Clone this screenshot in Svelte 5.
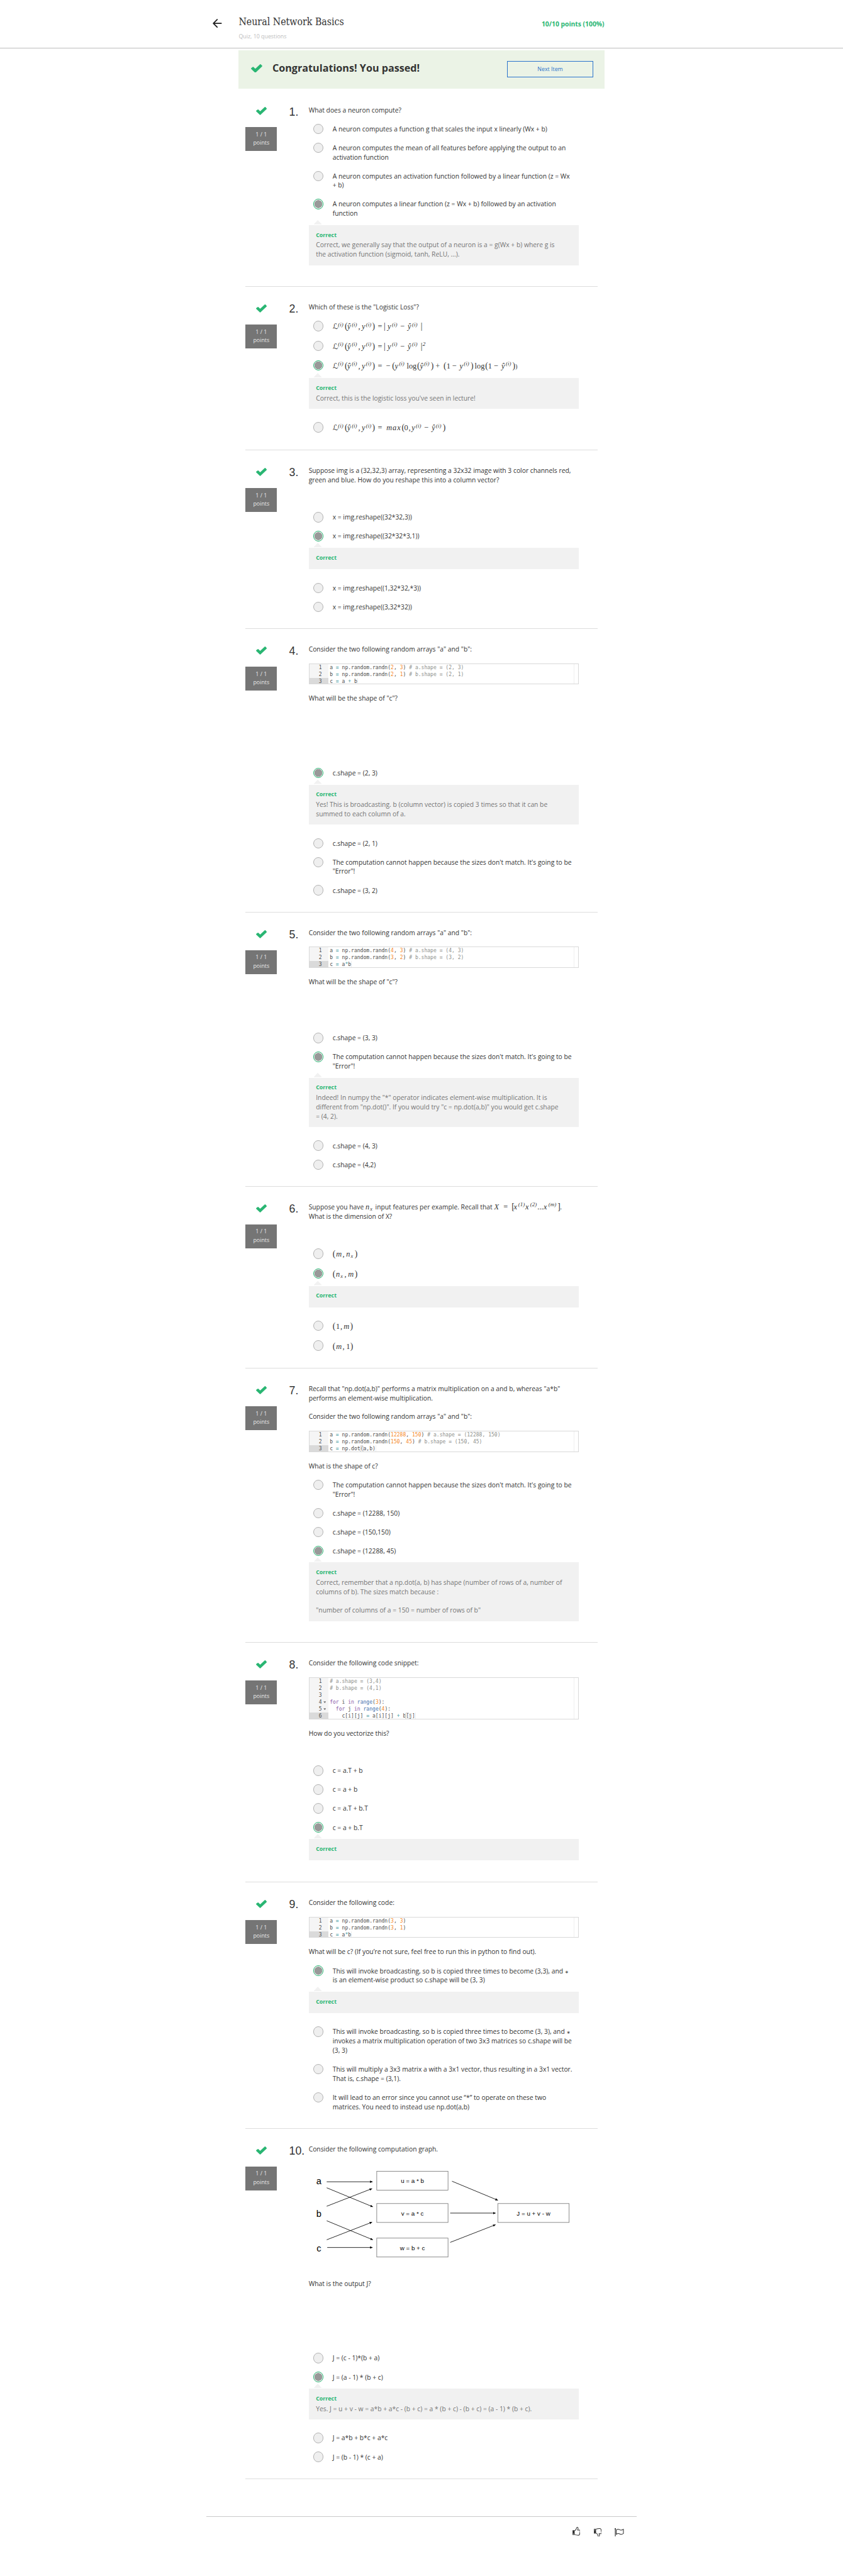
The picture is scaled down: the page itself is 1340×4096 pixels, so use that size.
<script>
  // A maths token is [kind, text, slot width].
  const supI = (w) => ['sup', '(i)', w];
  const lossHead = [
    ['cal', 'ℒ', 16.2], supI(20.4), ['op', '(', 7.8], ['it', 'ŷ', 13.4], supI(19.5),
    ['op', ',', 10.4], ['it', 'y', 13], supI(18.6), ['op', ')', 17]
  ];
  const absBody = [
    ['op', '=', 18], ['op', '|', 11.7], ['it', 'y', 13], supI(25.6),
    ['op', '−', 22], ['it', 'ŷ', 13.4], supI(25.8), ['op', '|', 6]
  ];
  const m = (tokens) => ({ math: tokens });
  const isFence = (kind, text) => kind === 'op' && '()[]|'.includes(text);

  const opt = (...lines) => ({ lines });
  const ok = (lines, notes = []) => ({ lines, correct: true, notes });

  const num = (t) => ['n', t];
  const op = (t) => ['o', t];
  const com = (t) => ['c', t];
  const kw = (t) => ['k', t];
  const fn = (t) => ['f', t];
  const randn = (name, a, b, comment) => [
    name + ' ', op('='), ' np.random.randn(', num(a), ', ', num(b), ') ', com(comment)
  ];
  const mismatch = ["The computation cannot happen because the sizes don't match. It's going to be", '"Error"!'];
  const arrays = { p: ['Consider the two following random arrays "a" and "b":'] };

  const questions = [
    {
      body: [{ p: ['What does a neuron compute?'] }],
      options: [
        opt('A neuron computes a function g that scales the input x linearly (Wx + b)'),
        opt('A neuron computes the mean of all features before applying the output to an', 'activation function'),
        opt('A neuron computes an activation function followed by a linear function (z = Wx', '+ b)'),
        ok(['A neuron computes a linear function (z = Wx + b) followed by an activation', 'function'],
          ['Correct, we generally say that the output of a neuron is a = g(Wx + b) where g is', 'the activation function (sigmoid, tanh, ReLU, ...).'])
      ]
    },
    {
      body: [{ p: ['Which of these is the "Logistic Loss"?'] }],
      options: [
        opt([m([...lossHead, ...absBody])]),
        opt([m([...lossHead, ...absBody, ['sup', '2', 8]])]),
        ok([[m([...lossHead,
          ['op', '=', 25], ['op', '−', 18.2], ['op', '(', 8.2], ['it', 'y', 13], supI(23),
          ['op', 'log', 31.2], ['op', '(', 8.7], ['it', 'ŷ', 12.6], supI(20), ['op', ')', 14.3],
          ['op', '+', 24.3], ['op', '(', 9.1], ['op', '1', 17.3], ['op', '−', 22.1], ['it', 'y', 13],
          supI(20), ['op', ')', 12.6], ['op', 'log', 31.7], ['op', '(', 8.7], ['op', '1', 17.8],
          ['op', '−', 22.6], ['it', 'ŷ', 13], supI(20), ['op', ')', 8.7], ['small', ')', 6]])]],
          ["Correct, this is the logistic loss you've seen in lecture!"]),
        opt([m([...lossHead,
          ['op', '=', 24.3], ['it wide', 'max', 48], ['op', '(', 7.4], ['op', '0', 13.4], ['op', ',', 9.1],
          ['it', 'y', 13], supI(25.6), ['op', '−', 22.1], ['it', 'ŷ', 13], supI(20.4), ['op', ')', 8]])])
      ]
    },
    {
      body: [{ p: ['Suppose img is a (32,32,3) array, representing a 32x32 image with 3 color channels red,', 'green and blue. How do you reshape this into a column vector?'] }],
      blanks: 2,
      options: [
        opt('x = img.reshape((32*32,3))'),
        ok(['x = img.reshape((32*32*3,1))']),
        opt('x = img.reshape((1,32*32,*3))'),
        opt('x = img.reshape((3,32*32))')
      ]
    },
    {
      body: [
        arrays,
        { code: [randn('a', '2', '3', '# a.shape = (2, 3)'), randn('b', '2', '1', '# b.shape = (2, 1)'), ['c ', op('='), ' a ', op('+'), ' b']] },
        { p: ['What will be the shape of "c"?'] }
      ],
      blanks: 6,
      options: [
        ok(['c.shape = (2, 3)'], ['Yes! This is broadcasting. b (column vector) is copied 3 times so that it can be', 'summed to each column of a.']),
        opt('c.shape = (2, 1)'),
        opt(...mismatch),
        opt('c.shape = (3, 2)')
      ]
    },
    {
      body: [
        arrays,
        { code: [randn('a', '4', '3', '# a.shape = (4, 3)'), randn('b', '3', '2', '# b.shape = (3, 2)'), ['c ', op('='), ' a', op('*'), 'b']] },
        { p: ['What will be the shape of "c"?'] }
      ],
      blanks: 4,
      options: [
        opt('c.shape = (3, 3)'),
        ok(mismatch, ['Indeed! In numpy the "*" operator indicates element-wise multiplication. It is', 'different from "np.dot()". If you would try "c = np.dot(a,b)" you would get c.shape', '= (4, 2).']),
        opt('c.shape = (4, 3)'),
        opt('c.shape = (4,2)')
      ]
    },
    {
      body: [{
        p: [
          ['Suppose you have ', m([['it', 'n', 14.2], ['sub', 'x', 10.5]]), ' input features per example. Recall that ',
            m([['it', 'X', 28], ['op', '=', 25], ['op', '[', 6], ['it', 'x', 13.8], ['sup', '(1)', 21.5], ['it', 'x', 14.6],
              ['sup', '(2)', 22], ['op', '...', 18.5], ['it', 'x', 14.6], ['sup', '(m)', 27.6], ['op', ']', 7.5]]), '.'],
          'What is the dimension of X?'
        ]
      }],
      blanks: 2,
      options: [
        opt([m([['op', '(', 10], ['it wide', 'm', 20], ['op', ',', 10.7], ['it', 'n', 14], ['sub', 'x', 12], ['op', ')', 8]])]),
        ok([[m([['op', '(', 10], ['it', 'n', 14], ['sub', 'x', 11.6], ['op', ',', 9.5], ['it wide', 'm', 21.6], ['op', ')', 8]])]]),
        opt([m([['op', '(', 10], ['op', '1', 13.4], ['op', ',', 8.7], ['it wide', 'm', 20.6], ['op', ')', 8]])]),
        opt([m([['op', '(', 10], ['it wide', 'm', 20], ['op', ',', 10.7], ['op', '1', 12.6], ['op', ')', 8]])])
      ]
    },
    {
      body: [
        { p: ['Recall that "np.dot(a,b)" performs a matrix multiplication on a and b, whereas "a*b"', 'performs an element-wise multiplication.'] },
        arrays,
        { code: [randn('a', '12288', '150', '# a.shape = (12288, 150)'), randn('b', '150', '45', '# b.shape = (150, 45)'), ['c ', op('='), ' np.dot', ['m', '('], 'a,b)']] },
        { p: ['What is the shape of c?'] }
      ],
      options: [
        opt(...mismatch),
        opt('c.shape = (12288, 150)'),
        opt('c.shape = (150,150)'),
        ok(['c.shape = (12288, 45)'], ['Correct, remember that a np.dot(a, b) has shape (number of rows of a, number of', 'columns of b). The sizes match because :', '', '"number of columns of a = 150 = number of rows of b"'])
      ]
    },
    {
      body: [
        { p: ['Consider the following code snippet:'] },
        {
          folds: [3, 4],
          code: [
            [com('# a.shape = (3,4)')], [com('# b.shape = (4,1)')], [],
            [kw('for'), ' i ', kw('in'), ' ', fn('range'), '(', num('3'), '):'],
            ['  ', kw('for'), ' j ', kw('in'), ' ', fn('range'), '(', num('4'), '):'],
            ['    c[i][j] ', op('='), ' a[i][j] ', op('+'), ' b', ['m', '['], 'j]']
          ]
        },
        { p: ['How do you vectorize this?'] }
      ],
      blanks: 2,
      options: [
        opt('c = a.T + b'),
        opt('c = a + b'),
        opt('c = a.T + b.T'),
        ok(['c = a + b.T'])
      ]
    },
    {
      body: [
        { p: ['Consider the following code:'] },
        { code: [randn('a', '3', '3', ''), randn('b', '3', '1', ''), ['c ', op('='), ' a', op('*'), 'b']] },
        { p: ['What will be c? (If you’re not sure, feel free to run this in python to find out).'] }
      ],
      options: [
        ok([['This will invoke broadcasting, so b is copied three times to become (3,3), and ', { star: true }], 'is an element-wise product so c.shape will be (3, 3)']),
        opt(['This will invoke broadcasting, so b is copied three times to become (3, 3), and ', { star: true }], 'invokes a matrix multiplication operation of two 3x3 matrices so c.shape will be', '(3, 3)'),
        opt('This will multiply a 3x3 matrix a with a 3x1 vector, thus resulting in a 3x1 vector.', 'That is, c.shape = (3,1).'),
        opt('It will lead to an error since you cannot use “*” to operate on these two', 'matrices. You need to instead use np.dot(a,b)')
      ]
    },
    {
      body: [{ p: ['Consider the following computation graph.'] }, { graph: true }, { p: ['What is the output J?'] }],
      blanks: 6,
      options: [
        opt('J = (c - 1)*(b + a)'),
        ok(['J = (a - 1) * (b + c)'], ['Yes. J = u + v - w = a*b + a*c - (b + c) = a * (b + c) - (b + c) = (a - 1) * (b + c).']),
        opt('J = a*b + b*c + a*c'),
        opt('J = (b - 1) * (c + a)')
      ]
    }
  ];

  const parts = (line) => (Array.isArray(line) ? line : [line]);

  const nodes = [
    { x: 204.7, y: 52, label: 'u = a * b' },
    { x: 204.7, y: 149.5, label: 'v = a * c' },
    { x: 204.7, y: 253.8, label: 'w = b + c' },
    { x: 570, y: 149.5, label: 'J = u + v - w' }
  ];
  const inputs = [['a', 91.6], ['b', 189.4], ['c', 293.3]];
  const edges = [
    [53.7, 83.8, 192.1, 83.8], [53.7, 101.9, 192.9, 159.4], [53.7, 157.7, 190.5, 104.4],
    [53.7, 201.4, 192.9, 258.9], [53.7, 258.9, 190.5, 205.7], [55.3, 282.1, 192.1, 282.1],
    [431.7, 82.1, 570, 139.6], [426.2, 178.3, 563, 178.3], [426.2, 266.7, 563, 213.4]
  ];
</script>

{#snippet check()}
  <svg class="check" viewBox="0 0 34 26" preserveAspectRatio="none">
    <path d="M2 13.2 6.2 10 13 16.3 28.5 2 32 5.6 13 24Z" fill="#2ab673" stroke="#2ab673" stroke-width="3.6" stroke-linejoin="round" />
  </svg>
{/snippet}

{#snippet rich(line)}{#each parts(line) as part}{#if part.math}<span class="math">{#each part.math as [kind, text, w]}<span class="tok {kind}" class:fence={isFence(kind, text)} style="width: {w}px">{text}</span>{/each}</span>{:else if part.star}<span class="star">∗</span>{:else}{part}{/if}{/each}{/snippet}

{#snippet graph()}
  <svg class="graph" viewBox="0 0 815 378">
    <defs>
      <marker id="head" viewBox="0 0 8 8" refX="7.5" refY="4" markerWidth="8" markerHeight="8" markerUnits="userSpaceOnUse" orient="auto">
        <path d="M0 .5 8 4 0 7.5Z" />
      </marker>
    </defs>
    {#each edges as [x1, y1, x2, y2]}
      <line {x1} {y1} {x2} {y2} stroke="#000" stroke-width="1.6" marker-end="url(#head)" />
    {/each}
    {#each nodes as n}
      <rect x={n.x} y={n.y} width="215" height="57" fill="#fff" stroke="#777" stroke-width="1.6" />
      <text class="node" x={n.x + 107.6} y={n.y + 35.7}>{n.label}</text>
    {/each}
    {#each inputs as [label, y]}
      <text class="input" x="30.3" {y}>{label}</text>
    {/each}
  </svg>
{/snippet}

<div class="page">
  <header>
    <div class="bar">
      <svg class="back" viewBox="0 0 28 27">
        <path d="M26 13.4H2.5M13.6 2 2.2 13.4 13.6 25" fill="none" stroke="#1f1f1f" stroke-width="3.4" stroke-linecap="round" stroke-linejoin="round" />
      </svg>
      <div class="titles">
        <h1>Neural Network Basics</h1>
        <p>Quiz, 10 questions</p>
      </div>
      <div class="score">10/10 points (100%)</div>
    </div>
  </header>

  <main>
    <div class="banner">
      {@render check()}
      <h2>Congratulations! You passed!</h2>
      <button>Next Item</button>
    </div>

    {#each questions as q, i}
      <section>
        <aside>
          {@render check()}
          <div class="badge"><span>1 / 1</span><span>points</span></div>
        </aside>
        <div class="number">{i + 1}.</div>
        <div class="content">
          <div class="body">
            {#each q.body as block}
              {#if block.p}
                <p>{#each block.p as line}<span class="line">{@render rich(line)}</span>{/each}</p>
              {:else if block.code}
                <div class="code">
                  {#each block.code as row, r}
                    <div class="row" class:active={r === block.code.length - 1}>
                      <span class="gutter">{r + 1}{#if block.folds?.includes(r)}<i class="fold"></i>{/if}</span>
                      <span class="src">{#each row as t}{#if Array.isArray(t)}<span class="t-{t[0]}">{t[1]}</span>{:else}{t}{/if}{/each}</span>
                    </div>
                  {/each}
                </div>
              {:else}
                {@render graph()}
              {/if}
            {/each}
            {#each Array(q.blanks ?? 0) as _}<div class="blank"></div>{/each}
          </div>

          <div class="options">
            {#each q.options as o}
              <div class="option">
                <span class="radio" class:on={o.correct}></span>
                <div class="label">{#each o.lines as line}<span class="line">{@render rich(line)}</span>{/each}</div>
              </div>
              {#if o.correct}
                <div class="feedback">
                  <strong>Correct</strong>
                  {#each o.notes as note}<span class="line">{note}</span>{/each}
                </div>
              {/if}
            {/each}
          </div>
        </div>
      </section>
    {/each}
  </main>

  <footer>
    <svg class="icon up" viewBox="0 0 24 26">
      <rect x="0" y="10" width="6.2" height="14" fill="#2d2d2d" />
      <circle cx="3" cy="21" r="1.1" fill="#fff" />
      <path d="M6.2 11.3C8.5 10.3 10.8 8 11.3 5.6 11.6 3.5 12 1 14 1 16.6 1 17 3.8 16.5 6 16.2 7.6 15.5 8.7 15.2 9.4H21C22.8 9.6 23.3 11 22.9 12.6L21.5 21.5C21 24 19.5 25 17.5 25 13 25 9.5 24.3 6.2 23" fill="none" stroke="#2d2d2d" stroke-width="1.9" stroke-linejoin="round" />
    </svg>
    <svg class="icon down" viewBox="0 0 24 26">
      <rect x="0" y="2" width="6.2" height="14" fill="#2d2d2d" />
      <circle cx="3" cy="5" r="1.1" fill="#fff" />
      <path d="M6.2 14.7C8.5 15.7 10.8 18 11.3 20.4 11.6 22.5 12 25 14 25 16.6 25 17 22.2 16.5 20 16.2 18.4 15.5 17.3 15.2 16.6H21C22.8 16.4 23.3 15 22.9 13.4L21.5 4.5C21 2 19.5 1 17.5 1 13 1 9.5 1.7 6.2 3" fill="none" stroke="#2d2d2d" stroke-width="1.9" stroke-linejoin="round" />
    </svg>
    <svg class="icon flag" viewBox="0 0 28 26">
      <path d="M2 1.5V25" stroke="#2d2d2d" stroke-width="2.1" />
      <circle cx="2" cy="2" r="2" fill="#2d2d2d" />
      <path d="M5 5.5C10 1.5 13.5 3.5 16 5 19 6.6 22.5 6 26.5 3V16C22.5 19.3 19 19 16 17.5 13 15.8 10 14.8 5 18.5Z" fill="none" stroke="#2d2d2d" stroke-width="1.9" stroke-linejoin="round" />
    </svg>
  </footer>
</div>

<style>
  :global(body) { margin: 0; background: #fff; }

  /* The page is designed on a 2543px canvas and shown at 52.7%. */
  .page {
    width: 2543px;
    height: 7773px;
    overflow: hidden;
    zoom: 0.52694;
    box-sizing: border-box;
    color: #333;
    font: 19.6px/28px 'Open Sans', sans-serif;
  }
  h1, h2, p { margin: 0; font-weight: 400; }
  .line { display: block; min-height: 28px; white-space: pre; }

  header { height: 145px; border-bottom: 2.6px solid #bdbdbd; margin-bottom: 4px; box-sizing: content-box; }
  .bar { width: 1181px; margin-left: 642px; padding-top: 43px; display: flex; }
  .back { width: 28px; height: 27px; margin: 13.5px 50px 0 0; }
  .titles { flex: 1; }
  h1 { font: 30px/44px 'DejaVu Serif Condensed', 'DejaVu Serif', serif; font-stretch: condensed; white-space: nowrap; }
  .titles p { font-size: 16.8px; line-height: 24px; margin-top: 12.5px; color: #bdbdbd; }
  .score { font-weight: 700; color: #2ab673; line-height: 28px; margin-top: 15px; }

  main { width: 1103.5px; margin-left: 719.7px; }
  .banner { height: 116px; background: #ebf3e6; display: flex; align-items: flex-start; box-sizing: border-box; padding: 33px 34px 0 37px; margin-bottom: 3.4px; }
  .check { display: block; width: 32.5px; height: 24.5px; }
  .banner .check { width: 34px; height: 26px; margin: 9px 31px 0 0; }
  h2 { flex: 1; font-size: 30.7px; line-height: 42px; font-weight: 700; white-space: nowrap; }
  button { width: 259px; height: 50px; border: 2px solid #2a73cc; background: transparent; color: #2a73cc; font: 16.8px 'Open Sans', sans-serif; padding: 0; }

  section { margin: 0 21px; padding-top: 47.8px; border-bottom: 2px solid #ddd; display: flex; }
  aside { width: 95px; display: flex; flex-direction: column; align-items: center; padding-top: 5.5px; }
  .badge { margin-top: 36px; width: 95px; height: 72px; box-sizing: border-box; padding-top: 11px; background: #757575; color: #e8e8e8; font-size: 16.8px; line-height: 25.2px; display: flex; flex-direction: column; align-items: center; }
  .number { margin-left: 36.5px; width: 59px; font: 33.6px/40px 'Liberation Sans', sans-serif; white-space: nowrap; }
  .content { width: 815px; }

  .body > p + p, .code { margin-top: 28px; }
  .code + p { margin-top: 28.4px; }
  .blank { height: 28px; }

  .code { position: relative; border: 2px solid #d9d9d9; box-sizing: border-box; font: 15.3px/21px 'DejaVu Sans Mono', monospace; color: #4d4d4c; overflow: hidden; display: flex; flex-direction: column; }
  .code::after { content: ''; position: absolute; top: 0; bottom: 0; right: 12px; border-right: 2px solid #efefef; }
  .row { display: flex; height: 21px; }
  .row:last-child { height: 18.4px; }
  .gutter { width: 56.7px; box-sizing: border-box; padding-right: 19px; text-align: right; background: #f5f5f5; position: relative; margin-right: 5px; flex: none; }
  .active .gutter { background: #dadada; }
  .active .src { border-right: 2px solid #eee; }
  .src { white-space: pre; }
  .fold { position: absolute; right: 6px; top: 8px; width: 8px; height: 6px; background: #777; clip-path: polygon(0 0, 100% 0, 50% 100%); }
  .t-n { color: #f5871f; }
  .t-o { color: #3e999f; }
  .t-c { color: #8e908c; }
  .t-k { color: #8959a8; }
  .t-f { color: #4271ae; }
  .t-m { outline: 1px solid #ccc; outline-offset: -1px; border-radius: 3px; }

  .graph { display: block; width: 815px; height: 378px; font-family: 'Liberation Sans', sans-serif; }
  .graph text { text-anchor: middle; fill: #000; }
  .node { font-size: 18.6px; }
  .input { font-size: 28px; }

  .options { padding: 29.4px 0 50px; }
  .option { display: flex; padding-left: 14px; }
  .option + .option { margin-top: 29px; }
  .radio { flex: none; width: 31px; height: 31px; box-sizing: border-box; border: 1.9px solid #b3b3b3; border-radius: 50%; background: #efefef; margin: -2px 27.3px -10px 0; }
  .radio.on { border: 2.6px solid #2ab673; background: radial-gradient(circle, #999 11.3px, #f2f2f2 12.3px); }
  .feedback { position: relative; margin: 20.7px 0 42.4px; padding: 18.5px 22px; background: #f1f1f1; color: #757575; }
  .feedback:last-child { margin-bottom: 13.5px; }
  .feedback::before { content: ''; position: absolute; left: 15px; top: -15px; width: 25px; height: 13px; background: #f1f1f1; clip-path: polygon(50% 0, 100% 100%, 0 100%); }
  .feedback strong { display: block; font-size: 16.8px; line-height: 25px; height: 28px; color: #2ab673; }

  .math { font-family: 'Liberation Serif', serif; font-size: 23.5px; line-height: 30.5px; display: inline-block; height: 30.5px; vertical-align: baseline; white-space: nowrap; }
  .body .math { line-height: 28px; height: 28px; }
  .tok { display: inline-block; line-height: 0; }
  .it { font-style: italic; }
  .wide { letter-spacing: 1.6px; text-align: center; }
  .cal { font-family: 'DejaVu Sans', sans-serif; font-size: 23px; }
  .fence { font-size: 26px; }
  .star { font-family: 'DejaVu Sans', sans-serif; font-size: 14px; line-height: 0; }
  .sup { font-size: 17px; vertical-align: 9px; font-style: italic; }
  .sub { font-size: 15.5px; vertical-align: -4px; font-style: italic; }
  .small { font-size: 19.6px; }

  footer { box-sizing: border-box; width: 1297px; margin: 112px 0 0 623px; border-top: 2px solid #c9c9c9; display: flex; justify-content: flex-end; padding: 32px 37px 0 0; }
  .icon { width: 24.5px; height: 26px; display: block; }
  .down { margin: 2px 0 0 40px; }
  .flag { width: 28px; margin: 2px 0 0 40px; }
</style>
